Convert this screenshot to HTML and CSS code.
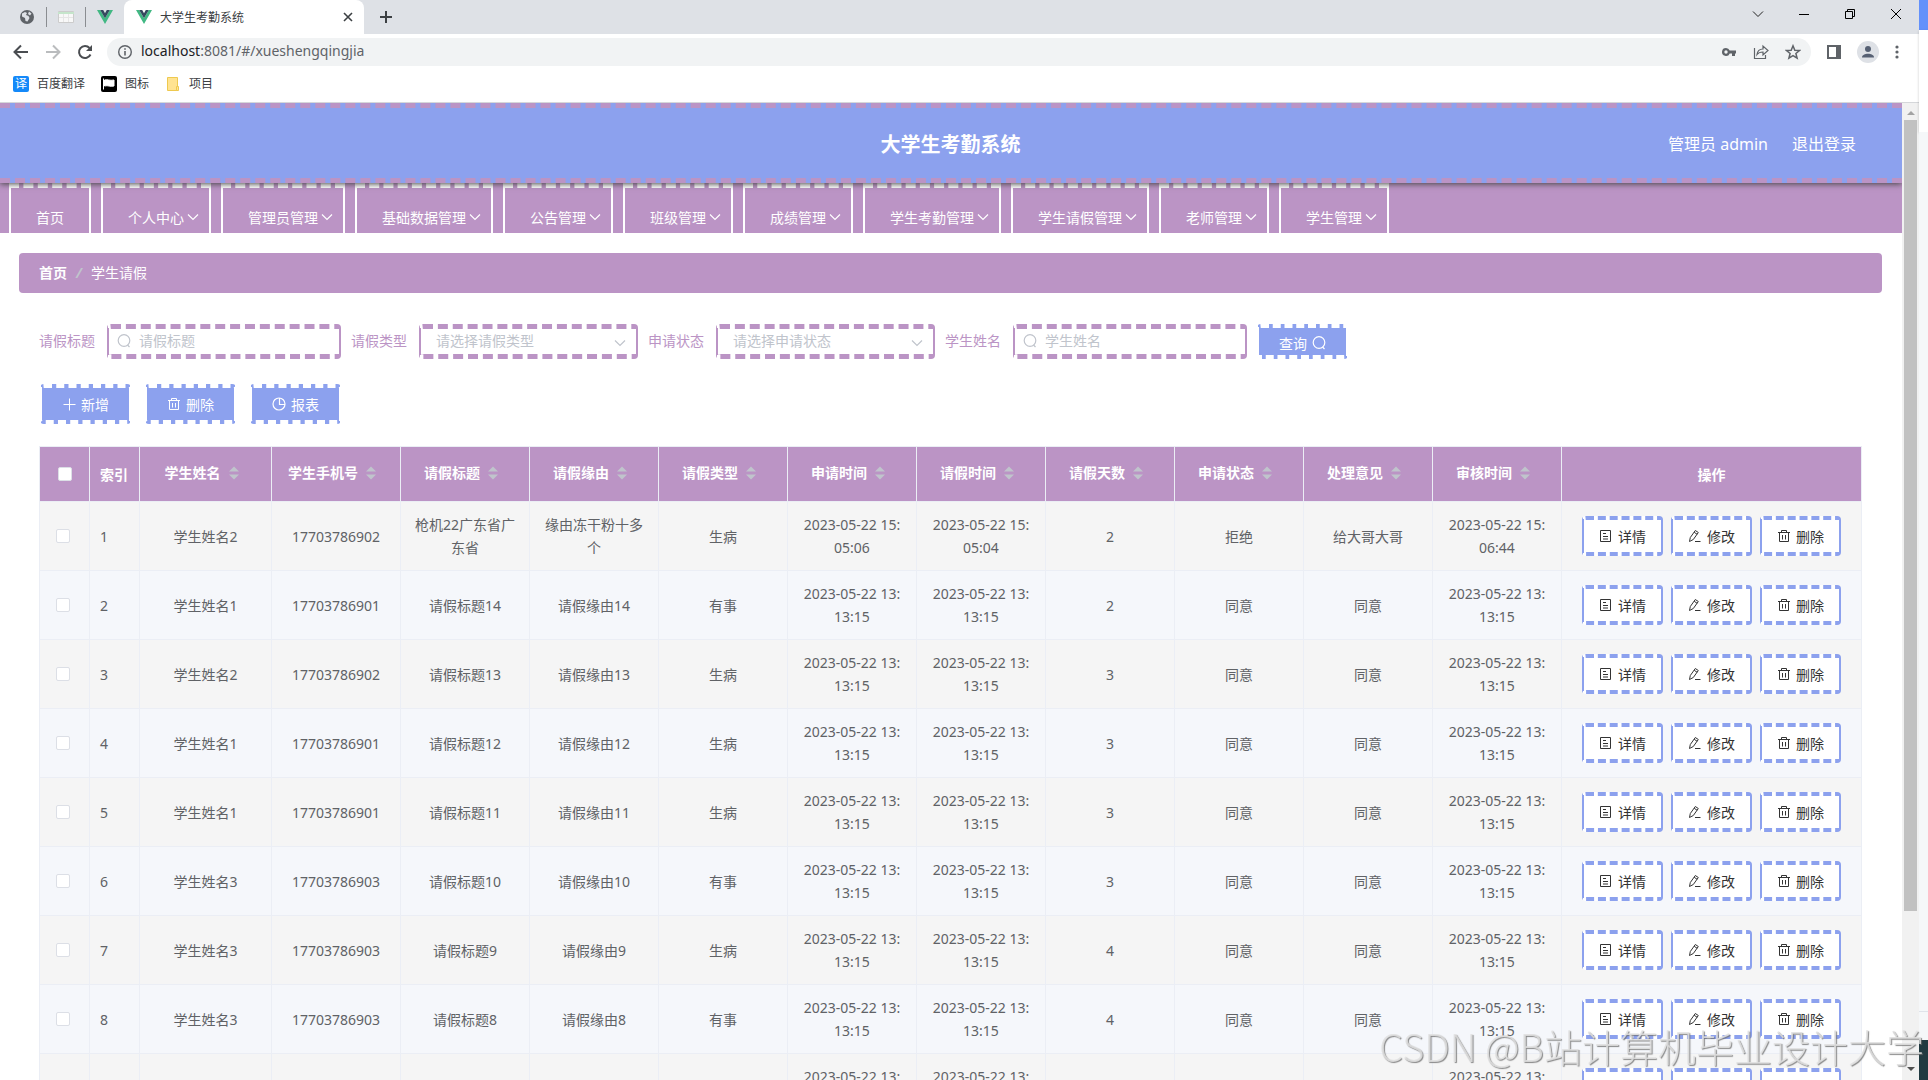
FILE: index.html
```html
<!DOCTYPE html>
<html lang="zh-CN">
<head>
  <meta charset="UTF-8">
  <title>大学生考勤系统</title>
  <link rel="stylesheet" href="styles.css">
</head>
<body>
  <!-- Icon set -->
  <svg class="sprite">
    <symbol id="i-down" viewBox="0 0 12 12"><path d="M1 3.500l5 5 5-5" fill="none" stroke="currentColor" stroke-width="1.200"/></symbol>
    <symbol id="i-search" viewBox="0 0 14 14"><circle cx="7" cy="6.500" r="5.800" fill="none" stroke="currentColor" stroke-width="1.200"/><path d="M10.500 11l2 2" stroke="currentColor" stroke-width="1.200"/></symbol>
    <symbol id="i-plus" viewBox="0 0 14 14"><path d="M7.500 1.500v12M1.500 7.500h12" stroke="currentColor"/></symbol>
    <symbol id="i-trash" viewBox="0 0 14 14"><path d="M1 3.500h12M4.500 3.500v-2h5v2M2.500 3.500v9h9v-9M5.500 6v4.500M8.500 6v4.500" fill="none" stroke="currentColor"/></symbol>
    <symbol id="i-pie" viewBox="0 0 14 14"><circle cx="7" cy="7" r="6" fill="none" stroke="currentColor" stroke-width="1.200"/><path d="M7.500 1v6.500H13" fill="none" stroke="currentColor" stroke-width="1.200"/></symbol>
    <symbol id="i-doc" viewBox="0 0 14 14"><path d="M1.500 1.500h10v11h-10zM4 4.500h3M4 7.500h5M4 10h5" fill="none" stroke="currentColor"/></symbol>
    <symbol id="i-edit" viewBox="0 0 14 14"><path d="M1.500 12.500l.8-4 5-7 3 2-5 7zM6.200 3.300l3 2M7 12.500h5.500" fill="none" stroke="currentColor"/></symbol>
    <symbol id="i-sort" viewBox="0 0 10 14"><path d="M0 5.500l5-5 5 5zM0 8.500l5 5 5-5z" fill="#c0c4cc"/></symbol>
    <symbol id="i-vue" viewBox="0 0 16 14"><path d="M0 0h3.200L8 8.300 12.800 0H16L8 14z" fill="#41b883"/><path d="M3.200 0h3L8 3.200 9.800 0h3L8 8.300z" fill="#35495e"/></symbol>
  </svg>

  <div class="desktop">
    <div class="browser">
      <div class="tabs">
        <button class="pin" aria-label="主页"><svg viewBox="0 0 16 16" width="16" height="16"><circle cx="8" cy="8" r="7" fill="#5f6368"/><path d="M3 4.500l3-1.500 2 1-1 2 2.500 1 1 2-2 3.500-2-.5-.5-3L3 7.500zM10 2.500l2.500 2-1.500 2-2-1.500z" fill="#dee1e6"/></svg></button>
        <button class="pin" aria-label="表格"><svg viewBox="0 0 16 12" width="16" height="12"><path d="M.5.5h15v11H.5z" fill="#f8f8f8" stroke="#ccc"/><path d="M0 1h16v2H0z" fill="#c5e5cb"/><path d="M1 6.500h14M5.500 3v8M10.500 3v8" stroke="#e6e6e6"/></svg></button>
        <button class="pin" aria-label="Vue"><svg width="16" height="14"><use href="#i-vue"/></svg></button>
        <div class="tab">
          <svg width="16" height="14"><use href="#i-vue"/></svg>
          <span>大学生考勤系统</span>
          <button class="plain" aria-label="关闭标签"><svg viewBox="0 0 10 10" width="10" height="10"><path d="M1 1l8 8M9 1l-8 8" stroke="#3c4043" stroke-width="1.600"/></svg></button>
        </div>
        <button class="plain new-tab" aria-label="新标签"><svg viewBox="0 0 12 12" width="12" height="12"><path d="M6 0v12M0 6h12" stroke="#3c4043" stroke-width="2"/></svg></button>
        <div class="window-buttons">
          <button class="plain" aria-label="搜索标签"><svg viewBox="0 0 12 12" width="12" height="12"><path d="M1 3.500l5 5 5-5" fill="none" stroke="#222"/></svg></button>
          <button class="plain" aria-label="最小化"><svg viewBox="0 0 12 12" width="12" height="12"><path d="M1 6.500h10" stroke="#000"/></svg></button>
          <button class="plain" aria-label="还原"><svg viewBox="0 0 12 12" width="12" height="12"><path d="M1.500 3.500h7v7h-7zM3.500 3.500v-2h7v7h-2" fill="none" stroke="#000"/></svg></button>
          <button class="plain" aria-label="关闭"><svg viewBox="0 0 12 12" width="12" height="12"><path d="M1 1l10 10M11 1L1 11" stroke="#000"/></svg></button>
        </div>
      </div>

      <div class="toolbar">
        <button class="plain" aria-label="后退"><svg viewBox="0 0 16 16" width="16" height="16"><path d="M15 8H2M8 1.500L1.500 8 8 14.500" fill="none" stroke="#4a4d51" stroke-width="2"/></svg></button>
        <button class="plain" aria-label="前进"><svg viewBox="0 0 16 16" width="16" height="16"><path d="M1 8h13M8 1.500L14.500 8 8 14.500" fill="none" stroke="#babcbe" stroke-width="2"/></svg></button>
        <button class="plain" aria-label="刷新"><svg viewBox="0 0 16 16" width="16" height="16"><path d="M13.500 10.500A6 6 0 1 1 12.500 4" fill="none" stroke="#4a4d51" stroke-width="2"/><path d="M15 1v6H9z" fill="#4a4d51"/></svg></button>
        <div class="address">
          <svg viewBox="0 0 16 16" width="16" height="16"><circle cx="8" cy="8" r="6.300" fill="none" stroke="#5f6368" stroke-width="1.400"/><path d="M8 7v4.500M8 4.300v1.500" stroke="#5f6368" stroke-width="1.600"/></svg>
          <span class="url"><b>localhost</b>:8081/#/xueshengqingjia</span>
          <button class="plain" aria-label="密码"><svg viewBox="0 0 16 16" width="16" height="16"><path d="M5 4a4 4 0 1 0 3.700 5.500H11V12h3V9.500h1v-3H8.700A4 4 0 0 0 5 4zm0 2.300a1.700 1.700 0 1 1 0 3.400 1.700 1.700 0 0 1 0-3.400z" fill="#5f6368"/></svg></button>
          <button class="plain" aria-label="分享"><svg viewBox="0 0 16 16" width="16" height="16"><path d="M1.500 4v10.500h11V11M4 10.500c.5-4 3-5.500 6-5.500V2l5 4.500-5 4.500V8c-2.500 0-4.500.5-6 2.500z" fill="none" stroke="#5f6368" stroke-width="1.200"/></svg></button>
          <button class="plain" aria-label="收藏"><svg viewBox="0 0 16 16" width="16" height="16"><path d="M8 1.800l1.800 4.400 4.700.3-3.600 3 1.200 4.700L8 11.700l-4.100 2.500 1.200-4.700-3.600-3 4.700-.3z" fill="none" stroke="#5f6368" stroke-width="1.500"/></svg></button>
        </div>
        <button class="plain" aria-label="侧边栏"><svg viewBox="0 0 14 14" width="14" height="14"><path d="M0 0h14v14H0zM2 2v10h7V2z" fill="#5f6368" fill-rule="evenodd"/></svg></button>
        <button class="plain" aria-label="用户"><svg viewBox="0 0 22 22" width="22" height="22"><circle cx="11" cy="11" r="11" fill="#dee1e6"/><circle cx="11" cy="8" r="3" fill="#566073"/><path d="M5 16.500c0-5 12-5 12 0z" fill="#566073"/></svg></button>
        <button class="plain" aria-label="菜单"><svg viewBox="0 0 4 14" width="4" height="14"><circle cx="2" cy="2" r="1.600" fill="#5f6368"/><circle cx="2" cy="7" r="1.600" fill="#5f6368"/><circle cx="2" cy="12" r="1.600" fill="#5f6368"/></svg></button>
      </div>

      <div class="bookmarks">
        <a href="#"><span class="fanyi">译</span>百度翻译</a>
        <a href="#"><svg viewBox="0 0 16 16" width="16" height="16"><rect width="16" height="16" rx="2"/><path d="M2.500 2.500v11M3.500 4c3-1 5 1 9.500 0v6c-4 1-6-1-9.500 0z" fill="#fff" stroke="#fff"/></svg>图标</a>
        <a href="#"><svg viewBox="0 0 16 16" width="16" height="16"><path d="M2.500 1.500h10v13h-10z" fill="#ffe391" stroke="#eec94f"/><path d="M11.500 10.500h2v4h-2z" fill="#ffe391" stroke="#eec94f"/></svg>项目</a>
      </div>

      <div class="viewport">
        <div class="page">
          <header class="header">
            <h1>大学生考勤系统</h1>
            <div class="user">
              <span>管理员 admin</span>
              <a href="#">退出登录</a>
            </div>
          </header>

          <nav class="menu" id="menu"></nav>

          <div class="breadcrumb">
            <a href="#">首页</a><i>/</i><span>学生请假</span>
          </div>

          <main class="content">
            <form class="search">
              <label for="title">请假标题</label>
              <div class="field"><svg class="icon"><use href="#i-search"/></svg><input id="title" type="text" placeholder="请假标题"></div>
              <label for="type">请假类型</label>
              <div class="field select"><select id="type"><option>请选择请假类型</option></select><svg class="icon"><use href="#i-down"/></svg></div>
              <label for="status">申请状态</label>
              <div class="field select"><select id="status"><option>请选择申请状态</option></select><svg class="icon"><use href="#i-down"/></svg></div>
              <label for="name">学生姓名</label>
              <div class="field"><svg class="icon"><use href="#i-search"/></svg><input id="name" type="text" placeholder="学生姓名"></div>
              <button type="button" class="btn query">查询<svg class="icon"><use href="#i-search"/></svg></button>
            </form>

            <div class="actions">
              <button class="btn"><svg class="icon"><use href="#i-plus"/></svg>新增</button>
              <button class="btn"><svg class="icon"><use href="#i-trash"/></svg>删除</button>
              <button class="btn"><svg class="icon"><use href="#i-pie"/></svg>报表</button>
            </div>

            <table class="list">
              <thead><tr id="head"></tr></thead>
              <tbody id="rows"></tbody>
            </table>
          </main>
        </div>
        <div class="scrollbar">
          <svg viewBox="0 0 8 5" width="8" height="5"><path d="M0 5l4-4 4 4z" fill="#a3a3a3"/></svg>
          <div class="track"><div class="thumb"></div></div>
          <svg viewBox="0 0 8 5" width="8" height="5"><path d="M0 0l4 4 4-4z" fill="#505050"/></svg>
        </div>
      </div>
    </div>
    <div class="behind">
      <div class="behind-bar"></div>
      <div class="behind-top"></div>
      <div class="behind-body"></div>
      <div class="behind-foot"></div>
      <div class="behind-dark"></div>
    </div>
  </div>
  <div class="watermark">CSDN @B站计算机毕业设计大学</div>

  <script src="app.js"></script>
</body>
</html>
```

FILE: styles.css
```css
* {
  box-sizing: border-box;
  margin: 0;
  padding: 0;
}

body {
  font-family: "Noto Sans", "Noto Sans CJK SC", sans-serif;
  font-size: 14px;
  color: #606266;
  background: #fff;
  overflow: hidden;
}

a {
  color: inherit;
  text-decoration: none;
}

button,
input,
select {
  font: inherit;
}

.sprite {
  display: none;
}

.icon {
  width: 14px;
  height: 14px;
  flex: none;
}

.desktop {
  display: flex;
  height: 100vh;
}

.browser {
  flex: 1;
  min-width: 0;
  display: flex;
  flex-direction: column;
}

/* Browser frame */
.plain {
  display: flex;
  border: none;
  background: none;
}

.tabs {
  display: flex;
  align-items: center;
  height: 34px;
  padding-left: 8px;
  background: #dee1e6;
}

.pin {
  display: flex;
  align-items: center;
  justify-content: center;
  width: 39px;
  height: 20px;
  border: none;
  border-right: 1px solid #8a8d91;
  background: none;
}

.pin:nth-child(3) {
  width: 38px;
  border-right: none;
}

.tab {
  display: flex;
  align-items: center;
  width: 240px;
  height: 34px;
  padding: 0 11px 0 12px;
  border-radius: 8px 8px 0 0;
  background: #fff;
  color: #3c4043;
  font-size: 12px;
}

.tab span {
  flex: 1;
  padding-left: 8px;
}

.new-tab {
  margin-left: 16px;
}

.window-buttons {
  display: flex;
  gap: 34px;
  margin-left: auto;
  padding: 0 17px 6px 0;
}

.toolbar {
  display: flex;
  align-items: center;
  gap: 16px;
  height: 36px;
  padding: 0 20px 0 13px;
}

.address {
  flex: 1;
  display: flex;
  align-items: center;
  gap: 16px;
  height: 28px;
  margin-left: -2px;
  padding: 0 10px;
  border-radius: 14px;
  background: #f1f3f4;
  color: #5f6368;
}

.address .url {
  flex: 1;
  margin-left: -8px;
  line-height: 28px;
  padding-bottom: 2px;
}

.address b {
  font-weight: normal;
  color: #202124;
}

.bookmarks {
  display: flex;
  gap: 16px;
  height: 33px;
  padding: 0 13px;
  border-bottom: 1px solid #d5d7da;
  color: #3c4043;
  font-size: 12px;
  line-height: 28px;
}

.bookmarks a {
  display: flex;
  align-items: center;
  gap: 8px;
  height: 28px;
}

.fanyi {
  width: 16px;
  height: 16px;
  border-radius: 2px;
  background: #1489f9;
  color: #fff;
  line-height: 16px;
  text-align: center;
}

.viewport {
  flex: 1;
  min-height: 0;
  display: flex;
}

.scrollbar {
  display: flex;
  flex-direction: column;
  align-items: center;
  width: 17px;
  padding: 7px 0 8px;
  background: #f1f1f1;
}

.scrollbar .track {
  flex: 1;
  width: 13px;
  margin: 5px 0;
}

.scrollbar .thumb {
  height: 84%;
  background: #c1c1c1;
}

/* Window that shows at the right edge */
.behind {
  display: flex;
  flex-direction: column;
  width: 9px;
}

.behind-bar {
  height: 30px;
  background: #6391fb;
}

.behind-top {
  height: 102px;
  box-shadow: 0 1px 3px rgba(0, 0, 0, 0.2);
}

.behind-body {
  flex: 1;
  background: #f5f7f9;
}

.behind-foot {
  height: 29px;
  border-top: 1px solid #dfe3ea;
  background: #f5f7f9;
}

.behind-dark {
  height: 40px;
  background: #213a41;
}

/* App */
.page {
  flex: 1;
  min-width: 0;
  overflow: hidden;
}

.header {
  position: relative;
  z-index: 1;
  display: grid;
  grid-template-columns: 1fr auto 1fr;
  align-items: center;
  height: 80px;
  padding: 0 46px 0 45px;
  border: 5px dashed #bb94c5;
  border-width: 5px 0;
  background: #8ca1ee;
  box-shadow: 0 1px 6px #444;
  color: #fff;
}

.header h1 {
  grid-column: 2;
  font-size: 20px;
}

.header .user {
  display: flex;
  justify-content: flex-end;
  gap: 24px;
  font-size: 16px;
}

.menu {
  display: flex;
  gap: 10px;
  height: 50px;
  padding-left: 9px;
  background: #bb94c5;
  overflow: hidden;
}

.menu a {
  display: flex;
  align-items: center;
  gap: 3px;
  height: 65px;
  padding: 0 10px 0 25px;
  border: 2px solid #fff;
  border-top: 5px dashed #fff;
  color: #fff;
  white-space: nowrap;
}

.menu a:first-child {
  padding-right: 25px;
}

.menu .icon {
  width: 12px;
  height: 12px;
}

.breadcrumb {
  display: flex;
  align-items: center;
  height: 40px;
  margin: 20px 20px 0 19px;
  padding: 0 20px 2px;
  border-radius: 4px;
  background: #bb94c5;
  color: #fff;
}

.breadcrumb a {
  font-weight: bold;
}

.breadcrumb i {
  margin: 0 9px;
  color: #c0c4cc;
  font-weight: bold;
}

.content {
  padding: 30px 40px 0 39px;
}

.search {
  display: flex;
  align-items: center;
  height: 36px;
}

.search label {
  margin-right: 12px;
  padding-bottom: 2px;
  color: #bb94c5;
}

.field {
  position: relative;
  width: 234px;
  margin-right: 10px;
}

.field.select {
  width: 219px;
}

.field input,
.field select {
  display: block;
  width: 100%;
  height: 35px;
  padding: 0 30px 2px;
  border: 2px solid #bb94c5;
  border-top: 5px dashed #bb94c5;
  border-bottom: 5px dashed #bb94c5;
  border-radius: 4px;
  background: #fff;
  color: #c0c4cc;
}

.field select {
  padding: 0 15px 2px;
  appearance: none;
}

.field input::placeholder {
  color: #c0c4cc;
}

.field .icon {
  position: absolute;
  top: 10px;
  left: 10px;
  color: #c0c4cc;
}

.field.select .icon {
  top: 13px;
  right: 12px;
  left: auto;
  width: 12px;
  height: 12px;
}

.btn {
  display: flex;
  align-items: center;
  justify-content: center;
  gap: 5px;
  width: 91px;
  height: 40px;
  border: 2px solid #fff;
  border-top: 4px dashed #fff;
  border-bottom: 4px dashed #fff;
  border-radius: 4px;
  background: #8ca1ee;
  color: #fff;
}

.query {
  height: 35px;
  padding-top: 4px;
}

.actions {
  display: flex;
  gap: 14px;
  margin-top: 25px;
  padding-left: 1px;
}

.list {
  width: 100%;
  margin-top: 22px;
  border-collapse: collapse;
  table-layout: fixed;
}

.list th,
.list td {
  height: 69px;
  padding: 0 10px;
  border: 1px solid #ebeef5;
  line-height: 23px;
  text-align: center;
}

.list th {
  height: 55px;
  background: #bb94c5;
  color: #fff;
}

.list .w-small {
  width: 50px;
  text-align: left;
}

.list .w-name {
  width: 132px;
}

.list .w-ops {
  width: 300px;
}

.list tr:nth-child(odd) td {
  background: #f5f5f5;
}

.list tr:nth-child(even) td {
  background: #f5f7fb;
}

.list .check {
  padding: 0 0 0 16px;
}

.list th.check {
  padding-left: 18px;
}

.check input {
  display: block;
  width: 14px;
  height: 14px;
  border: 1px solid #dcdfe6;
  border-radius: 2px;
  background: #fff;
  appearance: none;
}

.sort {
  display: flex;
  align-items: center;
  justify-content: center;
  gap: 8px;
  width: 100%;
  padding: 0 8px 3px 0;
  border: none;
  background: none;
  color: #fff;
  font-weight: bold;
}

.sort svg {
  width: 10px;
  height: 14px;
}

.ops {
  display: flex;
  justify-content: center;
  gap: 8px;
}

.ops button {
  display: flex;
  align-items: center;
  justify-content: center;
  gap: 5px;
  width: 81px;
  height: 40px;
  border: 2px solid #8ca1ee;
  border-top: 4px dashed #8ca1ee;
  border-bottom: 4px dashed #8ca1ee;
  border-radius: 4px;
  background: #fff;
  color: #333;
}

.watermark {
  position: fixed;
  right: 4px;
  bottom: 7px;
  color: rgba(225, 225, 225, 0.85);
  font-family: "Noto Sans CJK SC", sans-serif;
  font-size: 38px;
  font-weight: 300;
  line-height: 54px;
  text-shadow: 1px 1px 1px rgba(110, 110, 110, 0.8);
  white-space: nowrap;
  pointer-events: none;
}
```

FILE: app.js
```js
const menus = ["首页", "个人中心", "管理员管理", "基础数据管理", "公告管理", "班级管理", "成绩管理", "学生考勤管理", "学生请假管理", "老师管理", "学生管理"];
const columns = ["学生姓名", "学生手机号", "请假标题", "请假缘由", "请假类型", "申请时间", "请假时间", "请假天数", "申请状态", "处理意见", "审核时间"];
const t = "2023-05-22 13:<br>13:15";
const rows = [
  ["学生姓名2", "17703786902", "枪机22广东省广东省", "缘由冻干粉十多个", "生病", "2023-05-22 15:<br>05:06", "2023-05-22 15:<br>05:04", "2", "拒绝", "给大哥大哥", "2023-05-22 15:<br>06:44"],
  ["学生姓名1", "17703786901", "请假标题14", "请假缘由14", "有事", t, t, "2", "同意", "同意", t],
  ["学生姓名2", "17703786902", "请假标题13", "请假缘由13", "生病", t, t, "3", "同意", "同意", t],
  ["学生姓名1", "17703786901", "请假标题12", "请假缘由12", "生病", t, t, "3", "同意", "同意", t],
  ["学生姓名1", "17703786901", "请假标题11", "请假缘由11", "生病", t, t, "3", "同意", "同意", t],
  ["学生姓名3", "17703786903", "请假标题10", "请假缘由10", "有事", t, t, "3", "同意", "同意", t],
  ["学生姓名3", "17703786903", "请假标题9", "请假缘由9", "生病", t, t, "4", "同意", "同意", t],
  ["学生姓名3", "17703786903", "请假标题8", "请假缘由8", "有事", t, t, "4", "同意", "同意", t],
  ["", "", "", "", "", t, t, "", "", "", t]
];

const icon = name => `<svg class="icon"><use href="#i-${name}"/></svg>`;

document.getElementById("menu").innerHTML = menus
  .map((m, i) => `<a href="#">${m}${i ? icon("down") : ""}</a>`)
  .join("");

document.getElementById("head").innerHTML =
  '<th class="w-small check"><input type="checkbox" aria-label="全选"></th><th class="w-small">索引</th>' +
  columns.map((c, i) => `<th${i ? "" : ' class="w-name"'}><button class="sort">${c}${icon("sort")}</button></th>`).join("") +
  '<th class="w-ops">操作</th>';

const ops = `<div class="ops"><button>${icon("doc")}详情</button><button>${icon("edit")}修改</button><button>${icon("trash")}删除</button></div>`;

document.getElementById("rows").innerHTML = rows
  .map((r, i) => `<tr><td class="check"><input type="checkbox" aria-label="选择"></td><td class="w-small">${i < 8 ? i + 1 : ""}</td>` +
    r.map(c => `<td>${c}</td>`).join("") + `<td>${ops}</td></tr>`)
  .join("");
```
